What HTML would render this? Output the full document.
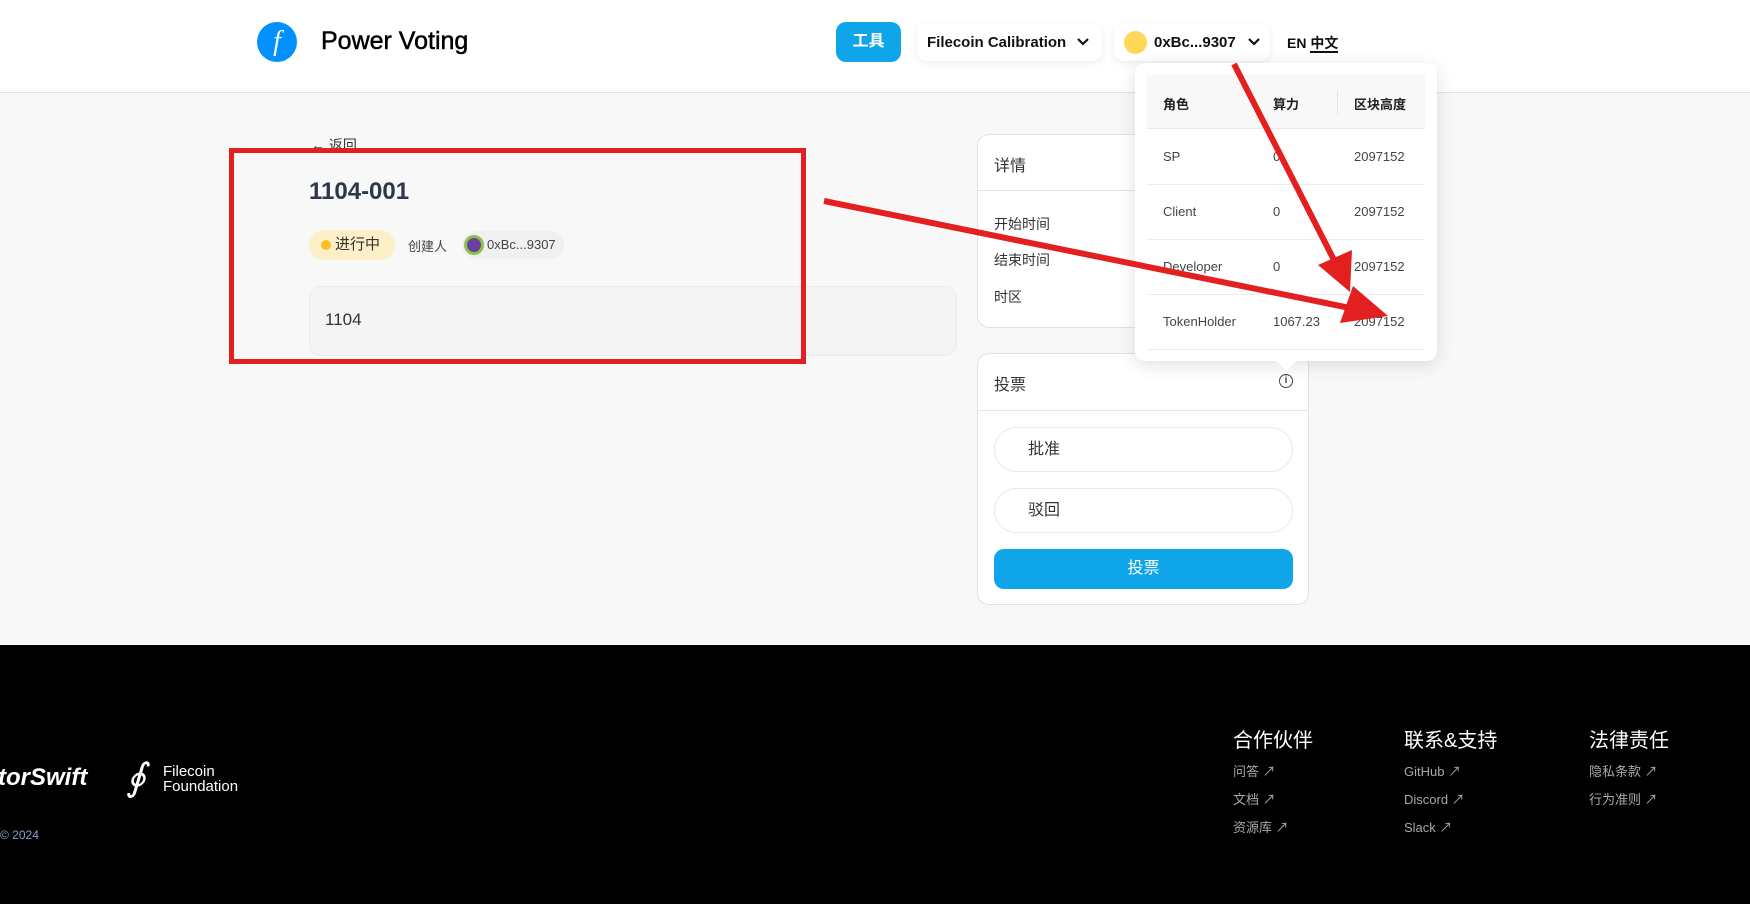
<!DOCTYPE html>
<html><head><meta charset="utf-8">
<style>
*{box-sizing:border-box;margin:0;padding:0}
body{width:1750px;height:904px;position:relative;overflow:hidden;background:#f8f8f8;font-family:"Liberation Sans","Noto Sans CJK SC",sans-serif;color:#333}
.abs{position:absolute}
.header{left:0;top:0;width:1750px;height:93px;background:#fff;border-bottom:1px solid #e3e3e3}
.card{background:#fff;border:1px solid #e2e2e2;border-radius:12px}
.tt{white-space:nowrap}
.footer{left:0;top:645px;width:1750px;height:259px;background:#000}
.fh{color:#fff;font-size:20px}
.fl{color:#a8a8a8;font-size:13px}
</style></head><body>
<div class="abs header"></div>
<div class="abs" style="left:257px;top:22px;width:40px;height:40px;border-radius:50%;background:#0090ff;color:#fff;font-family:'Liberation Serif',serif;font-style:italic;font-size:28px;text-align:center;line-height:40px">f</div>
<div class="abs tt" style="left:321px;top:27px;font-size:25px;color:#000;-webkit-text-stroke:0.5px #000">Power Voting</div>
<div class="abs" style="left:836px;top:22px;width:65px;height:40px;border-radius:10px;background:#0ea5e9;color:#fff;font-size:16px;font-weight:bold;text-align:center;line-height:40px">工具</div>
<div class="abs tt" style="left:917px;top:24px;width:185px;height:37px;border-radius:10px;background:#fff;box-shadow:0 2px 8px rgba(0,0,0,.08);font-size:15px;font-weight:bold;color:#111;line-height:37px;padding-left:10px">Filecoin Calibration</div>
<svg class="abs" style="left:1076px;top:37px" width="14" height="10"><path d="M2 2 L7 7 L12 2" fill="none" stroke="#111" stroke-width="2.2"/></svg>
<div class="abs tt" style="left:1114px;top:24px;width:156px;height:37px;border-radius:10px;background:#fff;box-shadow:0 2px 8px rgba(0,0,0,.08);font-size:15px;font-weight:bold;color:#111;line-height:37px;padding-left:40px">0xBc...9307</div>
<svg class="abs" style="left:1247px;top:37px" width="14" height="10"><path d="M2 2 L7 7 L12 2" fill="none" stroke="#111" stroke-width="2.2"/></svg>
<div class="abs" style="left:1124px;top:31px;width:23px;height:23px;border-radius:50%;background:#fdd85a"></div>
<div class="abs tt" style="left:1287px;top:33px;font-size:14px;font-weight:bold;color:#111">EN <span style="border-bottom:2px solid #111">中文</span></div>

<div class="abs tt" style="left:311px;top:135px;font-size:14px;color:#333">&#8592; 返回</div>
<div class="abs tt" style="left:309px;top:178px;font-size:24px;font-weight:bold;color:#2d3748">1104-001</div>
<div class="abs tt" style="left:309px;top:230px;width:86px;height:30px;border-radius:15px;background:#fdefc8;font-size:15px;line-height:30px;padding-left:26px;color:#333">进行中</div>
<div class="abs" style="left:321px;top:240px;width:10px;height:10px;border-radius:50%;background:#fbbf24"></div>
<div class="abs tt" style="left:408px;top:236px;font-size:13px;color:#444">创建人</div>
<div class="abs tt" style="left:462px;top:231px;width:102px;height:28px;border-radius:14px;background:#f0f0f0;font-size:13px;line-height:28px;padding-left:25px;color:#444">0xBc...9307</div>
<div class="abs" style="left:464px;top:235px;width:20px;height:20px;border-radius:50%;background:#6b3fa0;border:3px solid #8bc34a"></div>
<div class="abs" style="left:309px;top:286px;width:648px;height:70px;border-radius:12px;background:#f4f4f4;border:1px solid #ececec;font-size:17px;line-height:66px;padding-left:15px;color:#333">1104</div>

<div class="abs card" style="left:977px;top:134px;width:332px;height:194px"></div>
<div class="abs" style="left:978px;top:190px;width:330px;height:1px;background:#e5e5e5"></div>
<div class="abs tt" style="left:994px;top:152px;font-size:16px">详情</div>
<div class="abs tt" style="left:994px;top:214px;font-size:14px">开始时间</div>
<div class="abs tt" style="left:994px;top:250px;font-size:14px">结束时间</div>
<div class="abs tt" style="left:994px;top:287px;font-size:14px">时区</div>

<div class="abs card" style="left:977px;top:353px;width:332px;height:252px"></div>
<div class="abs" style="left:978px;top:410px;width:330px;height:1px;background:#e5e5e5"></div>
<div class="abs tt" style="left:994px;top:371px;font-size:16px">投票</div>
<div class="abs" style="left:1279px;top:374px;width:14px;height:14px;border-radius:50%;border:1.5px solid #444;font-size:10px;line-height:11px;text-align:center;font-weight:bold;color:#444">i</div>
<div class="abs" style="left:994px;top:427px;width:299px;height:45px;border-radius:23px;border:1px solid #e8e8e8;background:#fff;font-size:16px;line-height:43px;padding-left:33px">批准</div>
<div class="abs" style="left:994px;top:488px;width:299px;height:45px;border-radius:23px;border:1px solid #e8e8e8;background:#fff;font-size:16px;line-height:43px;padding-left:33px">驳回</div>
<div class="abs" style="left:994px;top:549px;width:299px;height:40px;border-radius:10px;background:#0ea5e9;color:#fff;font-size:16px;text-align:center;line-height:40px">投票</div>

<div class="abs" style="left:1135px;top:63px;width:302px;height:298px;border-radius:10px;background:#fff;box-shadow:0 4px 18px rgba(0,0,0,.12)"></div>
<div class="abs" style="left:1279px;top:354px;width:14px;height:14px;background:#fff;transform:rotate(45deg)"></div>
<div class="abs" style="left:1147px;top:75px;width:278px;height:54px;background:#f8f8f8;border-bottom:1px solid #e8e8e8"></div>
<div class="abs" style="left:1337px;top:90px;width:1px;height:24px;background:#e5e5e5"></div>
<div class="abs tt" style="left:1163px;top:94px;font-size:13px;font-weight:bold;color:#222">角色</div>
<div class="abs tt" style="left:1273px;top:94px;font-size:13px;font-weight:bold;color:#222">算力</div>
<div class="abs tt" style="left:1354px;top:94px;font-size:13px;font-weight:bold;color:#222">区块高度</div>
<div class="abs" style="left:1147px;top:184px;width:278px;height:1px;background:#ececec"></div>
<div class="abs" style="left:1147px;top:239px;width:278px;height:1px;background:#ececec"></div>
<div class="abs" style="left:1147px;top:294px;width:278px;height:1px;background:#ececec"></div>
<div class="abs" style="left:1147px;top:349px;width:278px;height:1px;background:#ececec"></div>
<div class="abs tt" style="left:1163px;top:149px;font-size:13px;color:#444">SP</div>
<div class="abs tt" style="left:1273px;top:149px;font-size:13px;color:#444">0</div>
<div class="abs tt" style="left:1354px;top:149px;font-size:13px;color:#444">2097152</div>
<div class="abs tt" style="left:1163px;top:204px;font-size:13px;color:#444">Client</div>
<div class="abs tt" style="left:1273px;top:204px;font-size:13px;color:#444">0</div>
<div class="abs tt" style="left:1354px;top:204px;font-size:13px;color:#444">2097152</div>
<div class="abs tt" style="left:1163px;top:259px;font-size:13px;color:#444">Developer</div>
<div class="abs tt" style="left:1273px;top:259px;font-size:13px;color:#444">0</div>
<div class="abs tt" style="left:1354px;top:259px;font-size:13px;color:#444">2097152</div>
<div class="abs tt" style="left:1163px;top:314px;font-size:13px;color:#444">TokenHolder</div>
<div class="abs tt" style="left:1273px;top:314px;font-size:13px;color:#444">1067.23</div>
<div class="abs tt" style="left:1354px;top:314px;font-size:13px;color:#444">2097152</div>

<div class="abs" style="left:229px;top:148px;width:577px;height:216px;border:5px solid #e41f1f"></div>
<svg class="abs" style="left:0;top:0" width="1750" height="904">
<line x1="824" y1="201" x2="1350" y2="308" stroke="#e41f1f" stroke-width="6"/>
<polygon points="1388,316 1340,323 1353,286" fill="#e41f1f"/>
<line x1="1234" y1="64" x2="1335" y2="262" stroke="#e41f1f" stroke-width="6"/>
<polygon points="1350,292 1318,265 1352,250" fill="#e41f1f"/>
</svg>

<div class="abs footer"></div>
<div class="abs tt" style="left:-2px;top:764px;font-size:24px;font-weight:bold;font-style:italic;color:#fff">torSwift</div>
<div class="abs tt" style="left:126px;top:758px;font-family:'Liberation Serif',serif;font-style:italic;font-size:38px;color:#fff;line-height:40px">&#8750;</div>
<div class="abs" style="left:163px;top:764px;font-size:15px;color:#fff;line-height:15px">Filecoin<br>Foundation</div>
<div class="abs tt" style="left:0;top:828px;font-size:12px;color:#8aa0c8">© 2024</div>
<div class="abs tt fh" style="left:1233px;top:724px">合作伙伴</div>
<div class="abs tt fh" style="left:1404px;top:724px">联系&amp;支持</div>
<div class="abs tt fh" style="left:1589px;top:724px">法律责任</div>
<div class="abs tt fl" style="left:1233px;top:761px">问答 ↗</div>
<div class="abs tt fl" style="left:1233px;top:789px">文档 ↗</div>
<div class="abs tt fl" style="left:1233px;top:817px">资源库 ↗</div>
<div class="abs tt fl" style="left:1404px;top:761px">GitHub ↗</div>
<div class="abs tt fl" style="left:1404px;top:789px">Discord ↗</div>
<div class="abs tt fl" style="left:1404px;top:817px">Slack ↗</div>
<div class="abs tt fl" style="left:1589px;top:761px">隐私条款 ↗</div>
<div class="abs tt fl" style="left:1589px;top:789px">行为准则 ↗</div>
</body></html>
